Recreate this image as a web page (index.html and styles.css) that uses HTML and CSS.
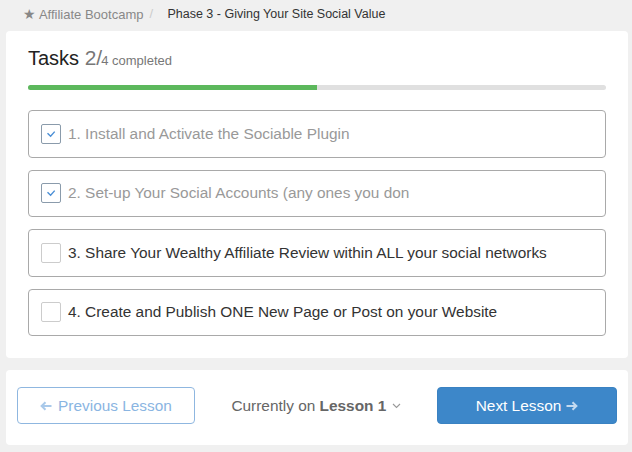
FILE: index.html
```html
<!DOCTYPE html>
<html>
<head>
<meta charset="utf-8">
<link rel="stylesheet" href="styles.css">
</head>
<body>
<nav class="crumbs">
  <span class="crumb-link"><span class="star">★</span> Affiliate Bootcamp</span>
  <span class="sep">/</span>
  <span class="crumb-current">Phase 3 - Giving Your Site Social Value</span>
</nav>

<section class="card tasks">
  <h2 class="tasks-title">Tasks <span class="count">2/</span><span class="total">4 completed</span></h2>
  <div class="progress"><div class="progress-fill" style="width:50%"></div></div>
  <ul class="task-list">
    <li class="task done"><span class="box"><svg width="12" height="12" viewBox="0 0 12 12"><path d="M2.5 5.2 L5.6 8.3 L9.7 3.6" fill="none" stroke="#4a8fd6" stroke-width="1.4"/></svg></span><span class="label">1. Install and Activate the Sociable Plugin</span></li>
    <li class="task done"><span class="box"><svg width="12" height="12" viewBox="0 0 12 12"><path d="M2.5 5.2 L5.6 8.3 L9.7 3.6" fill="none" stroke="#4a8fd6" stroke-width="1.4"/></svg></span><span class="label">2. Set-up Your Social Accounts (any ones you don</span></li>
    <li class="task"><span class="box"></span><span class="label">3. Share Your Wealthy Affiliate Review within ALL your social networks</span></li>
    <li class="task"><span class="box"></span><span class="label">4. Create and Publish ONE New Page or Post on your Website</span></li>
  </ul>
</section>

<section class="card pager">
  <a class="btn btn-prev"><svg class="arrow" width="12" height="10" viewBox="0 0 12 10"><path d="M11.5 5 H2 M5.5 1.2 L1.6 5 L5.5 8.8" fill="none" stroke="#a9c9ea" stroke-width="2"/></svg>Previous Lesson</a>
  <span class="current">Currently on <b>Lesson 1</b> <svg class="chev" width="9" height="6" viewBox="0 0 9 6"><path d="M1 1 L4.5 4.5 L8 1" fill="none" stroke="#999" stroke-width="1.1"/></svg></span>
  <a class="btn btn-next">Next Lesson<svg class="arrow arrow-r" width="12" height="10" viewBox="0 0 12 10"><path d="M0.5 5 H10 M6.5 1.2 L10.4 5 L6.5 8.8" fill="none" stroke="#c3daf0" stroke-width="2"/></svg></a>
</section>
</body>
</html>
```
FILE: styles.css
```css
* { box-sizing: border-box; }
body {
  margin: 0;
  background: #f0f0f0;
  font-family: "Liberation Sans", Arial, sans-serif;
  color: #333;
  width: 632px;
  height: 452px;
  overflow: hidden;
}
.crumbs {
  height: 31px;
  display: flex;
  align-items: center;
  padding: 0 0 4px 23px;
  font-size: 13px;
}
.crumb-link { color: #888; }
.star { font-size: 14px; color: #888; }
.sep { color: #ccc; margin: 0 0 0 6px; width: 18px; }
.crumb-current { color: #333; font-size: 12.5px; }

.card {
  background: #fff;
  border-radius: 4px;
  margin: 0 4px 0 6px;
}
.tasks {
  padding: 15px 22px 22px 22px;
}
.tasks-title {
  margin: 0;
  font-weight: normal;
  font-size: 20px;
  line-height: 24px;
  color: #222;
}
.count { color: #777; font-size: 21px; }
.total { color: #777; font-size: 13px; margin-left: -1px; }
.progress {
  margin-top: 12px;
  height: 5px;
  background: #e0e0e0;
  border-radius: 3px;
  overflow: hidden;
}
.progress-fill {
  height: 100%;
  background: #5cb85c;
}
.task-list {
  list-style: none;
  margin: 20px 0 0 0;
  padding: 0;
  display: flex;
  flex-direction: column;
  gap: 12px;
}
.task {
  height: 47.5px;
  border: 1px solid #a9a9a9;
  border-radius: 4px;
  display: flex;
  align-items: center;
  padding-left: 12px;
  gap: 7px;
  font-size: 15.4px;
  color: #333;
}
.task.done { color: #999; }
.box {
  width: 20px;
  height: 20px;
  border: 1px solid #ccc;
  border-radius: 2px;
  display: flex;
  align-items: center;
  justify-content: center;
  flex: none;
}
.task.done .box { border-color: #8a9bab; }

.pager {
  margin-top: 12px;
  height: 75px;
  display: flex;
  align-items: center;
  justify-content: space-between;
  padding: 0 11px 4px 11px;
}
.btn {
  height: 37px;
  border-radius: 4px;
  display: flex;
  align-items: center;
  justify-content: center;
  font-size: 15.4px;
  text-decoration: none;
}
.arrow { margin-right: 6px; }
.arrow-r { margin: 0 0 0 5px; }
.btn-prev {
  width: 178px;
  border: 1px solid #8fb7e0;
  color: #8ab5e2;
  background: #fff;
}
.btn-next {
  width: 180px;
  background: #3d87c9;
  color: #fff;
  border: 1px solid #3a82c2;
}
.current {
  font-size: 15.4px;
  color: #666;
}
.current b { color: #666; }
.chev { margin-left: 1px; vertical-align: 2px; }
```
